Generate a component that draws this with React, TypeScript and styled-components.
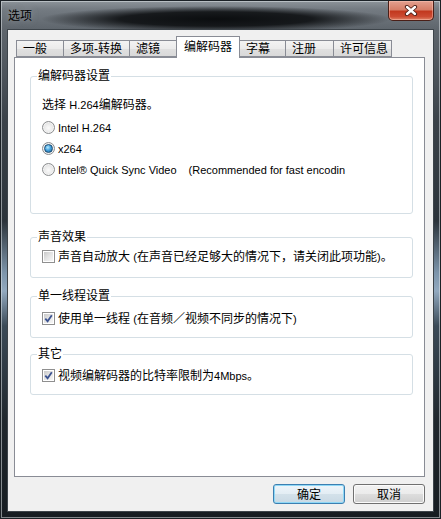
import React from "react";
import styled, { createGlobalStyle } from "styled-components";

const Global = createGlobalStyle`
  html, body { margin: 0; padding: 0; background: #ffffff; }
  body {
    font-family: "Liberation Sans", "Noto Sans CJK SC", sans-serif;
    font-size: 12px;
    line-height: 14px;
    color: #000;
  }
  * { box-sizing: border-box; }
`;

const Window = styled.div`
  width: 441px;
  height: 519px;
  display: flex;
  flex-direction: column;
  border: 1px solid #1b2126;
  box-shadow: inset 0 0 0 1px rgba(220, 225, 230, 0.55);
  background:
    radial-gradient(175px 13px at 215px 18px, rgba(8, 10, 12, 0.97) 0%, rgba(8, 10, 12, 0.85) 55%, rgba(8, 10, 12, 0) 100%),
    linear-gradient(180deg, #8d949a 0px, #747b82 8px, #5f666d 28px, #3b4249 120px, #2c343b 220px, #7d95ab 272px, #92a9bf 290px, #3b4a57 325px, #20272d 420px, #161c21 519px);
`;

const TitleBar = styled.div`
  height: 28px;
  flex: none;
  display: flex;
  align-items: center;
  justify-content: space-between;
`;

const Title = styled.span`
  padding-left: 7px;
  font-family: "Noto Sans CJK SC", sans-serif;
  font-size: 12px;
  line-height: 14px;
  color: #000;
  text-shadow: 0 0 6px rgba(200, 205, 210, 0.5);
`;

const CloseButton = styled.div`
  align-self: flex-start;
  width: 46px;
  height: 20px;
  margin-right: 6px;
  border: 1px solid #4a1f17;
  border-top: none;
  border-radius: 0 0 5px 5px;
  background: linear-gradient(180deg, #e3a08f 0%, #d67e68 45%, #c2391f 55%, #cc4b32 82%, #de8366 100%);
  box-shadow: inset 0 0 0 1px rgba(255, 205, 190, 0.45);
  display: flex;
  align-items: center;
  justify-content: center;
`;

const Client = styled.div`
  flex: 1;
  margin: 0 6px 6px 6px;
  border: 1px solid #3d444a;
  background: #f0f0f0;
  padding: 6px 8px 7px 6px;
  display: flex;
  flex-direction: column;
`;

const TabStrip = styled.div`
  height: 21px;
  flex: none;
  display: flex;
  align-items: flex-end;
  padding-left: 2px;
`;

const Tab = styled.div<{ $active?: boolean; $w: number }>`
  position: relative;
  z-index: ${(p) => (p.$active ? 2 : 1)};
  width: ${(p) => p.$w}px;
  height: ${(p) => (p.$active ? 22 : 17)}px;
  margin-bottom: ${(p) => (p.$active ? -1 : 0)}px;
  margin-left: -1px;
  &:first-child { margin-left: 0; }
  border: 1px solid #898c95;
  border-bottom: ${(p) => (p.$active ? "none" : "1px solid #898c95")};
  background: ${(p) =>
    p.$active
      ? "#ffffff"
      : "linear-gradient(180deg, #f3f3f3 0%, #ebebeb 50%, #e0e0e0 51%, #d9d9d9 100%)"};
  padding: ${(p) => (p.$active ? "0 0 2px 7px" : "0 0 0 6px")};
  display: flex;
  align-items: center;
  font-family: "Liberation Sans", "Noto Sans CJK SC", sans-serif;
  font-size: 12px;
  white-space: nowrap;
`;

const Panel = styled.div`
  height: 420px;
  flex: none;
  background: #ffffff;
  border: 1px solid #898c95;
  padding: 18px 11px 0 15px;
  display: flex;
  flex-direction: column;
`;

const Group = styled.div<{ $mt: number; $h: number; $pt: number }>`
  position: relative;
  margin-top: ${(p) => p.$mt}px;
  height: ${(p) => p.$h}px;
  padding: ${(p) => p.$pt}px 0 0 11px;
  border: 1px solid #d5dfe5;
  border-radius: 3px;
  flex: none;
`;

const Legend = styled.span`
  position: absolute;
  top: -8px;
  left: 6px;
  padding: 0 1px;
  background: #ffffff;
  line-height: 14px;
  white-space: nowrap;
`;

const Row = styled.div<{ $mb?: number }>`
  height: 21px;
  margin-bottom: ${(p) => p.$mb ?? 0}px;
  display: flex;
  align-items: center;
  gap: 3px;
  white-space: nowrap;
`;

const Latin = styled.span`
  font-family: "Liberation Sans", sans-serif;
  font-size: 11px;
`;

const Note = styled.span`
  margin-left: 12px;
`;

const RadioDot = styled.span<{ $checked?: boolean }>`
  width: 13px;
  height: 13px;
  flex: none;
  border-radius: 50%;
  border: 1px solid #8b8d8f;
  background: radial-gradient(circle at 50% 55%, #fbfbfb 0%, #ececec 45%, #d2d2d2 100%);
  box-shadow: inset 0 0 0 1px #f4f4f4;
  display: flex;
  align-items: center;
  justify-content: center;
  &::after {
    content: "";
    display: ${(p) => (p.$checked ? "block" : "none")};
    width: 7px;
    height: 7px;
    border-radius: 50%;
    border: 1px solid #1d4d73;
    background: radial-gradient(circle at 40% 35%, #b8ecff 0%, #45a2df 45%, #17608f 100%);
  }
`;

const CheckBoxBox = styled.span`
  width: 13px;
  height: 13px;
  flex: none;
  border: 1px solid #8f8f8f;
  padding: 1px;
  background: linear-gradient(135deg, #c9c9c9 0%, #e4e4e4 50%, #f7f7f7 100%) content-box, #ffffff;
  display: flex;
  align-items: center;
  justify-content: center;
`;

const ButtonRow = styled.div`
  margin-top: 7px;
  display: flex;
  justify-content: flex-end;
  gap: 8px;
`;

const DialogButton = styled.div<{ $default?: boolean }>`
  width: 72px;
  height: 20px;
  border-radius: 3px;
  border: 1px solid ${(p) => (p.$default ? "#3c7fb1" : "#707070")};
  background: ${(p) =>
    p.$default
      ? "linear-gradient(180deg, #eef5fa 0%, #e3edf4 50%, #d3e1ea 51%, #c9d9e4 100%)"
      : "linear-gradient(180deg, #f2f2f2 0%, #ebebeb 50%, #dddddd 51%, #cfcfcf 100%)"};
  box-shadow: inset 0 0 0 1px ${(p) => (p.$default ? "#8fd8f6" : "#fbfbfb")};
  display: flex;
  align-items: center;
  justify-content: center;
  font-family: "Noto Sans CJK SC", sans-serif;
  font-size: 12px;
`;

const CloseIcon = () => (
  <svg width="14" height="11" viewBox="0 0 14 11">
    <path d="M3 2 L11 9 M11 2 L3 9" stroke="#4a1c14" strokeWidth="4.2" strokeLinecap="round" />
    <path d="M3 2 L11 9 M11 2 L3 9" stroke="#ffffff" strokeWidth="2.4" strokeLinecap="round" />
  </svg>
);

const Radio = ({ checked, children }: { checked?: boolean; children: React.ReactNode }) => (
  <Row>
    <RadioDot $checked={checked} />
    <span>{children}</span>
  </Row>
);

const Check = ({ checked, children }: { checked?: boolean; children: React.ReactNode }) => (
  <Row>
    <CheckBoxBox>
      {checked && (
        <svg width="9" height="9" viewBox="0 0 9 9">
          <path d="M1.3 4.6 L3.6 7.2 L7.8 1.2" stroke="#3c5390" strokeWidth="1.8" fill="none" />
        </svg>
      )}
    </CheckBoxBox>
    <span>{children}</span>
  </Row>
);

const tabs = [
  { label: "一般", w: 48 },
  { label: "多项-转换", w: 67 },
  { label: "滤镜", w: 48 },
  { label: "编解码器", w: 64, active: true },
  { label: "字幕", w: 47 },
  { label: "注册", w: 49 },
  { label: "许可信息", w: 59 },
];

export default function App() {
  return (
    <>
      <Global />
      <Window>
        <TitleBar>
          <Title>选项</Title>
          <CloseButton>
            <CloseIcon />
          </CloseButton>
        </TitleBar>
        <Client>
          <TabStrip>
            {tabs.map((t) => (
              <Tab key={t.label} $w={t.w} $active={t.active}>
                {t.label}
              </Tab>
            ))}
          </TabStrip>
          <Panel>
            <Group $mt={0} $h={138} $pt={17}>
              <Legend>编解码器设置</Legend>
              <Row $mb={2}>
                <span>
                  选择 <Latin>H.264</Latin>编解码器。
                </span>
              </Row>
              <Radio>
                <Latin>Intel H.264</Latin>
              </Radio>
              <Radio checked>
                <Latin>x264</Latin>
              </Radio>
              <Radio>
                <Latin>
                  Intel® Quick Sync Video<Note>(Recommended for fast encodin</Note>
                </Latin>
              </Radio>
            </Group>
            <Group $mt={23} $h={41} $pt={8}>
              <Legend>声音效果</Legend>
              <Check>
                声音自动放大 <Latin>(</Latin>在声音已经足够大的情况下，请关闭此项功能<Latin>)</Latin>。
              </Check>
            </Group>
            <Group $mt={18} $h={42} $pt={11}>
              <Legend>单一线程设置</Legend>
              <Check checked>
                使用单一线程 <Latin>(</Latin>在音频／视频不同步的情况下<Latin>)</Latin>
              </Check>
            </Group>
            <Group $mt={16} $h={41} $pt={10}>
              <Legend>其它</Legend>
              <Check checked>
                视频编解码器的比特率限制为<Latin>4Mbps</Latin>。
              </Check>
            </Group>
          </Panel>
          <ButtonRow>
            <DialogButton $default>确定</DialogButton>
            <DialogButton>取消</DialogButton>
          </ButtonRow>
        </Client>
      </Window>
    </>
  );
}
